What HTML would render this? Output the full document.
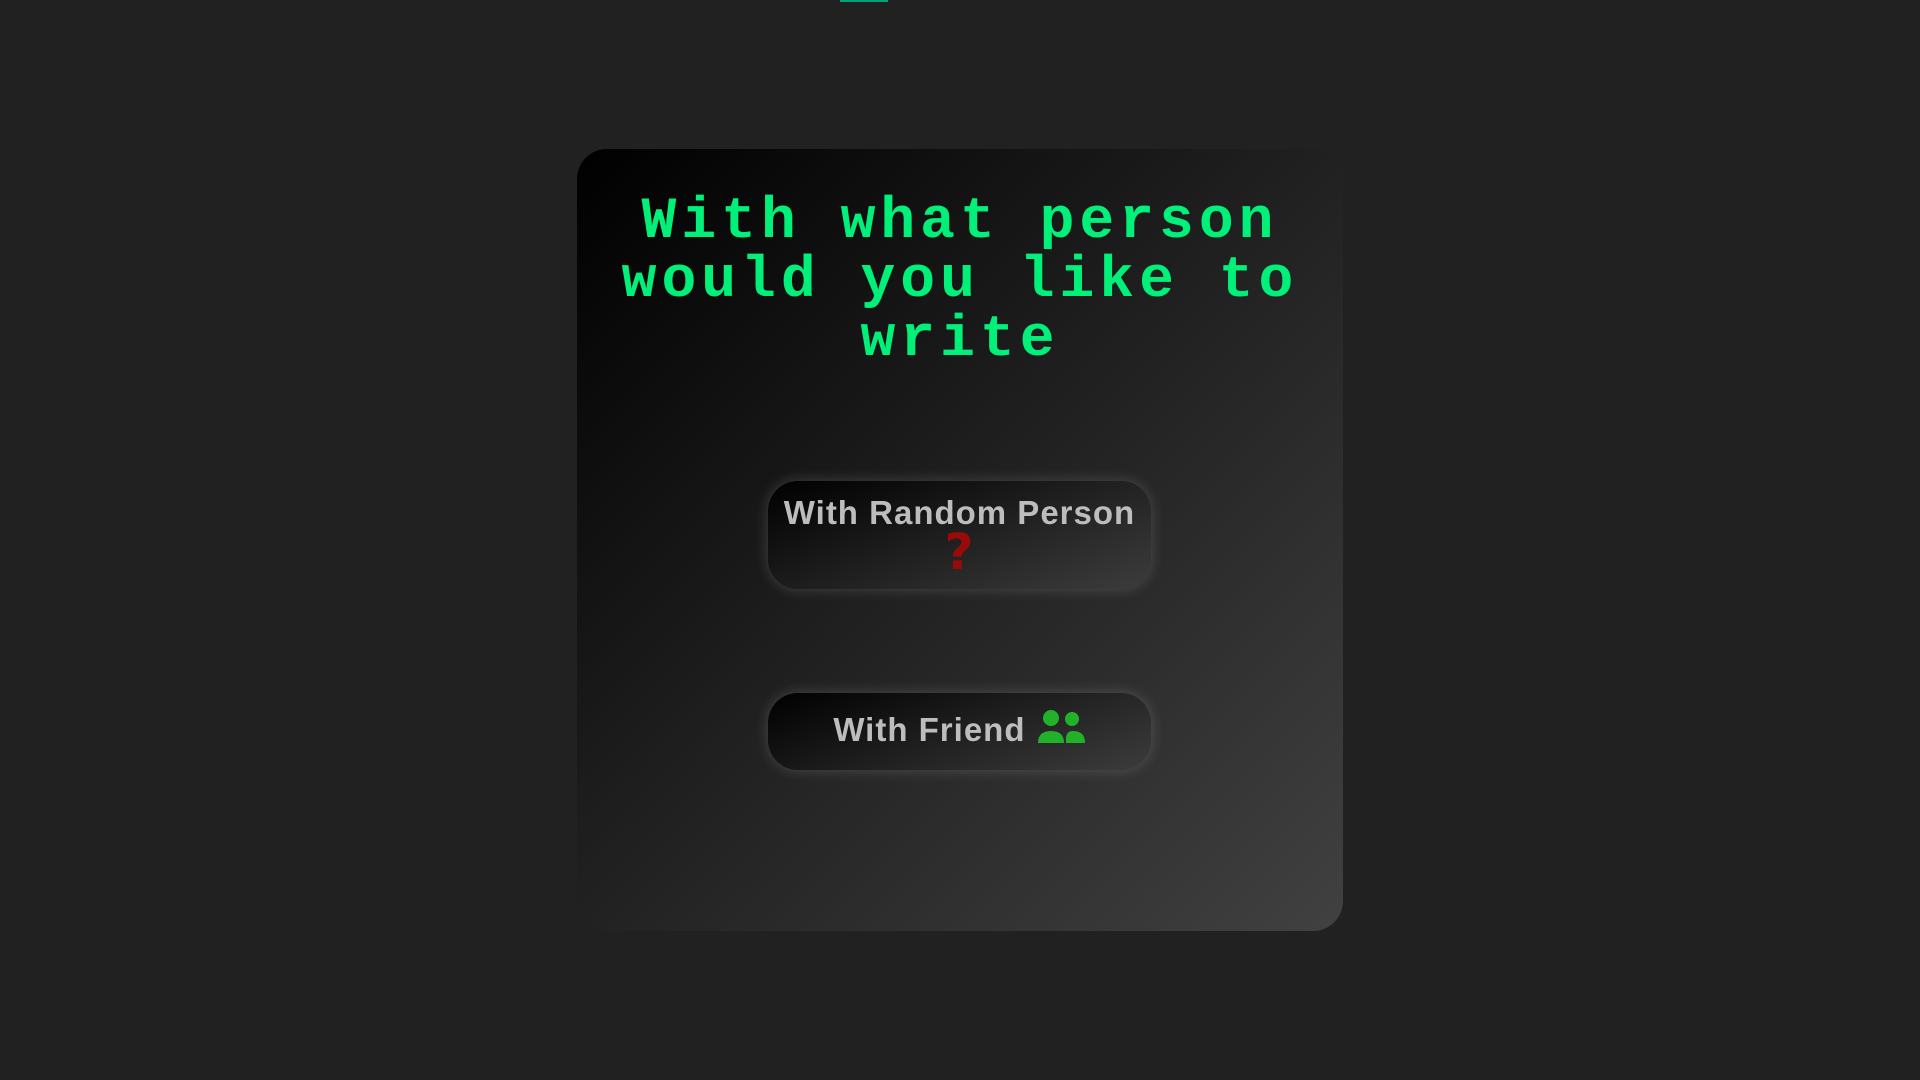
<!DOCTYPE html>
<html><head><style>
html,body{margin:0;padding:0;width:1920px;height:1080px;background:#212121;overflow:hidden;font-family:"Liberation Sans",sans-serif}
.bar{position:absolute;left:840px;top:0;width:48px;height:2px;background:#00a37a}
.card{position:absolute;left:577px;top:149px;width:766px;height:782px;border-radius:30px;background:linear-gradient(135deg,#000 0%,#1e1e1e 45%,#414141 100%)}
.title{position:absolute;left:0;top:193px;width:1920px;text-align:center;color:#00f07a;font-family:"Liberation Mono",monospace;font-weight:bold;font-size:58px;letter-spacing:5px;line-height:59px}
.btn{position:absolute;left:768px;width:383px;border-radius:30px;background:linear-gradient(160deg,#000 0%,#1f1f1f 50%,#3c3c3c 100%);box-shadow:0 0 14px rgba(255,255,255,0.18);color:#bdbdbd;font-weight:bold;font-size:33px;letter-spacing:1px;text-align:center}
.b1{top:481px;height:108px}
.b2{top:693px;height:77px}
</style></head><body>
<div class="bar"></div>
<div class="card"></div>
<div class="title">With what person<br>would you like to<br>write</div>
<div class="btn b1"><div style="padding-top:13px;line-height:38px">With Random Person</div><div style="color:#9a0a0a;font-size:50px;line-height:40px;font-weight:900;font-family:'DejaVu Sans',sans-serif">?</div></div>
<div class="btn b2"><div style="line-height:73px">With Friend <svg width="50" height="36" viewBox="0 0 50 36" style="vertical-align:-4px"><circle cx="15" cy="9" r="8" fill="#22b22a"/><path d="M2 34 q0-12 13-12 q13 0 13 12 z" fill="#22b22a"/><circle cx="36" cy="10" r="7" fill="#22b22a"/><path d="M30 34 v-4 q0-8 7-8 q12 0 12 12 z" fill="#22b22a"/></svg></div></div>
</body></html>
